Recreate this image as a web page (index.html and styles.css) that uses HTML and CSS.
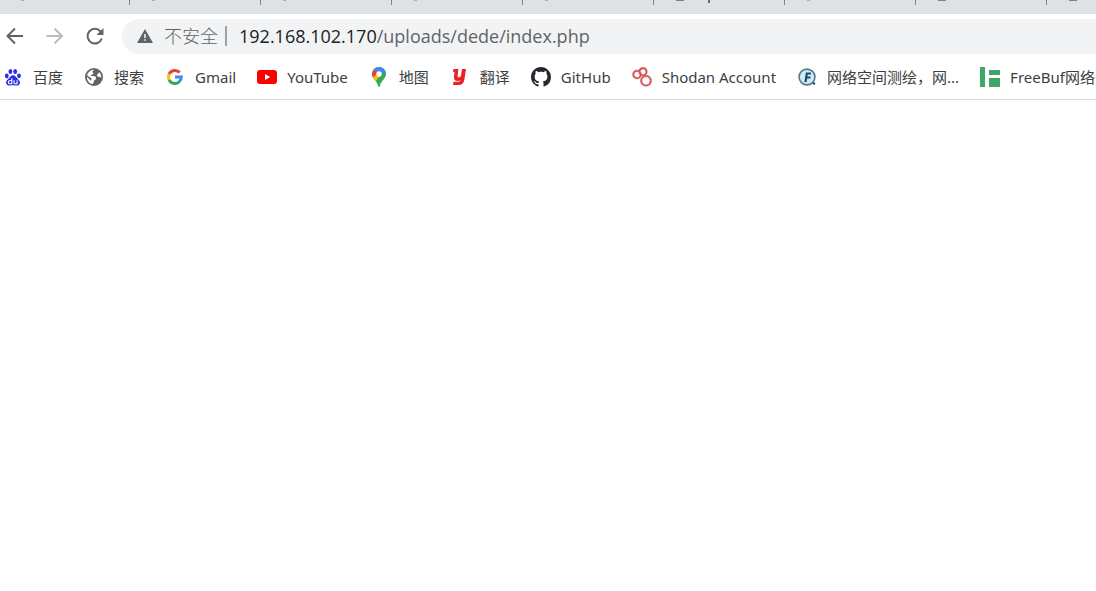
FILE: index.html
```html
<!DOCTYPE html>
<html lang="zh-CN">
<head>
  <meta charset="utf-8">
  <title>192.168.102.170/uploads/dede/index.php</title>
  <link rel="stylesheet" href="styles.css">
</head>
<body>

  <div class="tabs">
    <div class="tab"><i class="dot"></i></div>
    <div class="tab"><i class="dot"></i></div>
    <div class="tab"><i class="dot"></i></div>
    <div class="tab"><i class="dot"></i></div>
    <div class="tab"><i class="dot"></i></div>
    <div class="tab"><i class="arc"></i><i class="stem"></i></div>
    <div class="tab"><i class="dot"></i></div>
    <div class="tab"><i class="arc"></i></div>
    <div class="tab"><i class="arc"></i></div>
  </div>

  <div class="toolbar">
    <button class="nav" type="button" aria-label="后退">
      <svg viewBox="0 0 20 20"><path d="M18 9H3M10 1.500L2.500 9l7.500 7.500" fill="none" stroke="#5f6368" stroke-width="2"/></svg>
    </button>
    <button class="nav" type="button" aria-label="前进" disabled>
      <svg viewBox="0 0 20 20"><path d="M1.500 9h15M9.500 1.500L17 9l-7.500 7.500" fill="none" stroke="#babcbe" stroke-width="2"/></svg>
    </button>
    <button class="nav" type="button" aria-label="重新加载">
      <svg viewBox="0 0 20 20"><path d="M16.800 11.500A7.300 7.300 0 1 1 15.500 4.500" fill="none" stroke="#5f6368" stroke-width="2"/><path d="M18.500 1v7h-7z" fill="#5f6368"/></svg>
    </button>
    <div class="omnibox">
      <svg class="warn" viewBox="0 0 16 16"><path d="M8 1l8 14H0z" fill="#5f6368"/><path d="M7.200 6h1.600v4H7.200zM7.200 11.200h1.600v1.600H7.200z" fill="#f1f3f4"/></svg>
      <span class="unsafe">不安全</span>
      <span class="url"><b>192.168.102.170</b>/uploads/dede/index.php</span>
    </div>
  </div>

  <nav class="bookmarks">
    <a href="#">
      <svg viewBox="0 0 20 20"><g fill="#2a2fe0"><ellipse cx="3.800" cy="9" rx="1.900" ry="2.400"/><ellipse cx="7.400" cy="4.500" rx="1.900" ry="2.600"/><ellipse cx="12.200" cy="4.500" rx="1.900" ry="2.600"/><ellipse cx="16" cy="8.800" rx="1.900" ry="2.400"/><path d="M10 8.300c2 0 3 1.800 4.300 3.200 1.600 1.600 3 2.700 2.600 4.700-.5 2.300-2.400 2.500-4 2.200-1.900-.3-3.900-.3-5.800 0-2 .4-3.700-.2-4-2.300-.3-2 1.200-3.100 2.700-4.600C7.200 10 8 8.300 10 8.300z"/></g><path d="M8.800 11.200v5.600H7.100c-2.300 0-2.300-3.300 0-3.300h1.700M11 13.300v2.200c0 .9.500 1.300 1.200 1.300h1.900v-3.500" fill="none" stroke="#fff" stroke-width="1.100"/></svg>
      <span>百度</span>
    </a>
    <a href="#">
      <svg viewBox="0 0 20 20"><circle cx="10" cy="10" r="9" fill="#5f6368"/><path d="M10.500 2.800c-2 1-2.600 2.200-1.300 3.200.8.700-.3 1.900-1.800 1.700-.9-.1-.8 1.200.2 1.300 2.400.2 4.400 0 4.500 2.200.1 1.500-1.900 1.500-2.300 3-.3 1-.3 2.200-1.300 2.800C4.800 16.300 2.900 13.500 2.900 9.700l4 4c.8-.7.800-1.700.2-2.400L3.200 8.500C3.700 5.200 6.800 2.500 10.500 2.800zM13 8c-.4 1.400 1.200 2.200 2.700 1.700l1.500 1.200c.2-2.400-.6-4.400-2-5.700z" fill="#fff"/></svg>
      <span>搜索</span>
    </a>
    <a href="#">
      <svg viewBox="0 0 20 20"><g fill="none" stroke-width="3"><path d="M4.100 7.200A6.400 6.400 0 0 1 14.700 5.600" stroke="#ea4335"/><path d="M4.100 12.800a6.400 6.400 0 0 1 0-5.600" stroke="#fbbc05"/><path d="M14.200 14.800A6.400 6.400 0 0 1 4.100 12.800" stroke="#34a853"/><path d="M10 10h6.300a6.400 6.400 0 0 1-2.200 4.900" stroke="#4285f4"/></g></svg>
      <span>Gmail</span>
    </a>
    <a href="#">
      <svg viewBox="0 0 20 20"><rect y="3" width="20" height="14" rx="3" fill="#f00"/><path d="M8 7l5.200 3L8 13z" fill="#fff"/></svg>
      <span>YouTube</span>
    </a>
    <a href="#">
      <svg viewBox="0 0 20 20"><clipPath id="pin"><path d="M10 0a7 7 0 0 1 7 7c0 4.500-5 6.500-6.200 12.300-.2 1-1.400 1-1.600 0C8 13.500 3 11.500 3 7a7 7 0 0 1 7-7z"/></clipPath><g clip-path="url(#pin)"><path d="M0 0h20v20H0z" fill="#34a853"/><path d="M3 11l7-7v5l-5 5.500z" fill="#fbbc04"/><path d="M2 9.500V4l3-1.500L10 7 4 12z" fill="#ea4335"/><path d="M3 11.500L8 7l3 2-5 6z" fill="#fbbc04"/><path d="M4.500 2.500L10 7l5-4.500V0H4z" fill="#4285f4"/><path d="M10 7l5-6 3 4-1.500 1z" fill="#4285f4"/></g><circle cx="10" cy="7" r="2.700" fill="#fff"/></svg>
      <span>地图</span>
    </a>
    <a href="#">
      <svg viewBox="0 0 20 20"><path d="M3.500 2h5L7.600 8.500q-.2 2 1.300 2T11 8.500L12 2h4L14.300 13Q13.500 18 8.500 18H3l.5-3.200h5q1.700 0 2-1.800-1 1-2.800 1-4.200 0-3.700-4.500L4.500 5H3z" fill="#ec2027"/></svg>
      <span>翻译</span>
    </a>
    <a href="#">
      <svg viewBox="0 0 16 16"><path fill="#24292f" d="M8 0C3.580 0 0 3.580 0 8c0 3.540 2.290 6.530 5.470 7.590.4.070.55-.17.55-.38 0-.19-.01-.82-.01-1.490-2.010.37-2.530-.49-2.690-.94-.09-.23-.48-.94-.82-1.130-.28-.15-.68-.52-.01-.53.63-.01 1.080.58 1.230.82.72 1.210 1.870.87 2.330.66.07-.52.28-.87.51-1.070-1.780-.2-3.640-.89-3.640-3.950 0-.87.310-1.590.82-2.150-.08-.2-.36-1.020.08-2.120 0 0 .67-.21 2.200.82.64-.18 1.320-.27 2-.27s1.360.09 2 .27c1.530-1.040 2.200-.82 2.200-.82.44 1.100.16 1.920.08 2.120.51.56.82 1.270.82 2.150 0 3.070-1.870 3.750-3.650 3.950.29.25.54.73.54 1.480 0 1.070-.01 1.930-.01 2.200 0 .21.15.46.55.38A8.010 8.010 0 0 0 16 8c0-4.420-3.580-8-8-8z"/></svg>
      <span>GitHub</span>
    </a>
    <a href="#">
      <svg viewBox="0 0 20 20"><g fill="none" stroke="#e9a3a5" stroke-width="2.600"><circle cx="5" cy="7.500" r="3.700"/><circle cx="11" cy="4.700" r="3.500"/><circle cx="14" cy="13.700" r="4.800"/></g><g fill="none" stroke="#d5484d" stroke-width="1.200"><circle cx="5" cy="7.500" r="3.700"/><circle cx="11" cy="4.700" r="3.500"/><circle cx="14" cy="13.700" r="4.800"/></g></svg>
      <span>Shodan Account</span>
    </a>
    <a href="#">
      <svg viewBox="0 0 20 20"><circle cx="10" cy="10" r="7.900" fill="#c9eef9" stroke="#5c7687" stroke-width="1.600"/><path d="M8.500 15l1.300-8.500H14M9 10.500h4.500" fill="none" stroke="#24486b" stroke-width="2.200"/><circle cx="17" cy="16.500" r="1.200" fill="#24486b"/></svg>
      <span>网络空间测绘，网...</span>
    </a>
    <a href="#">
      <svg viewBox="0 0 20 20"><path d="M0 0h5v20H0zM9 3h11v5H9zM9 11h11v9H9z" fill="#41a567"/></svg>
      <span>FreeBuf网络安全</span>
    </a>
  </nav>

  <main class="page"></main>

</body>
</html>
```
FILE: styles.css
```css
body {
  margin: 0;
  background-color: #fff;
  font-family: "Open Sans", "Noto Sans CJK SC", sans-serif;
  overflow-x: hidden;
}

.tabs {
  display: flex;
  height: 14px;
  margin-left: -1px;
  background-color: #dee1e6;
  overflow: hidden;
}

.tab {
  display: flex;
  flex: 0 0 131px;
  box-sizing: border-box;
  height: 5px;
  padding-left: 22px;
  border-right: 1px solid #80868b;
}

.dot {
  width: 3px;
  height: 1px;
  background-color: #a5aad2;
}

.arc {
  width: 8px;
  height: 1px;
  background-color: #7d8185;
}

.stem {
  width: 2px;
  height: 3px;
  margin-left: 24px;
  background-color: #5f7180;
}

.toolbar {
  display: flex;
  align-items: center;
  height: 45px;
  padding-left: 5px;
}

.nav {
  width: 20px;
  height: 20px;
  margin-right: 20px;
  padding: 0;
  border: none;
  background: none;
}

.nav svg,
.bookmarks svg {
  display: block;
  width: 20px;
  height: 20px;
  flex: none;
}

.omnibox {
  display: flex;
  flex: 1;
  align-items: center;
  box-sizing: border-box;
  height: 35px;
  margin-left: -3px;
  padding: 0 0 2px 15px;
  border-radius: 18px 0 0 18px;
  background-color: #f1f3f4;
  color: #5f6368;
  font-size: 18px;
  white-space: nowrap;
}

.warn {
  width: 16px;
  height: 16px;
  margin-right: 11px;
}

.unsafe {
  height: 20px;
  margin-right: 12px;
  padding-right: 7px;
  border-right: 2px solid #9aa0a6;
  font-weight: 300;
  line-height: 20px;
}

.url b {
  color: #202124;
  font-weight: normal;
}

.bookmarks {
  display: flex;
  gap: 21px;
  box-sizing: border-box;
  height: 41px;
  padding: 8px 0 0 3px;
  border-bottom: 1px solid #dadce0;
  overflow: hidden;
}

.bookmarks a {
  display: flex;
  flex: none;
  gap: 10px;
  height: 20px;
  color: #3c4043;
  font-family: "Noto Sans", "Noto Sans CJK SC", sans-serif;
  font-size: 15px;
  line-height: 20px;
  text-decoration: none;
  white-space: nowrap;
}
```
